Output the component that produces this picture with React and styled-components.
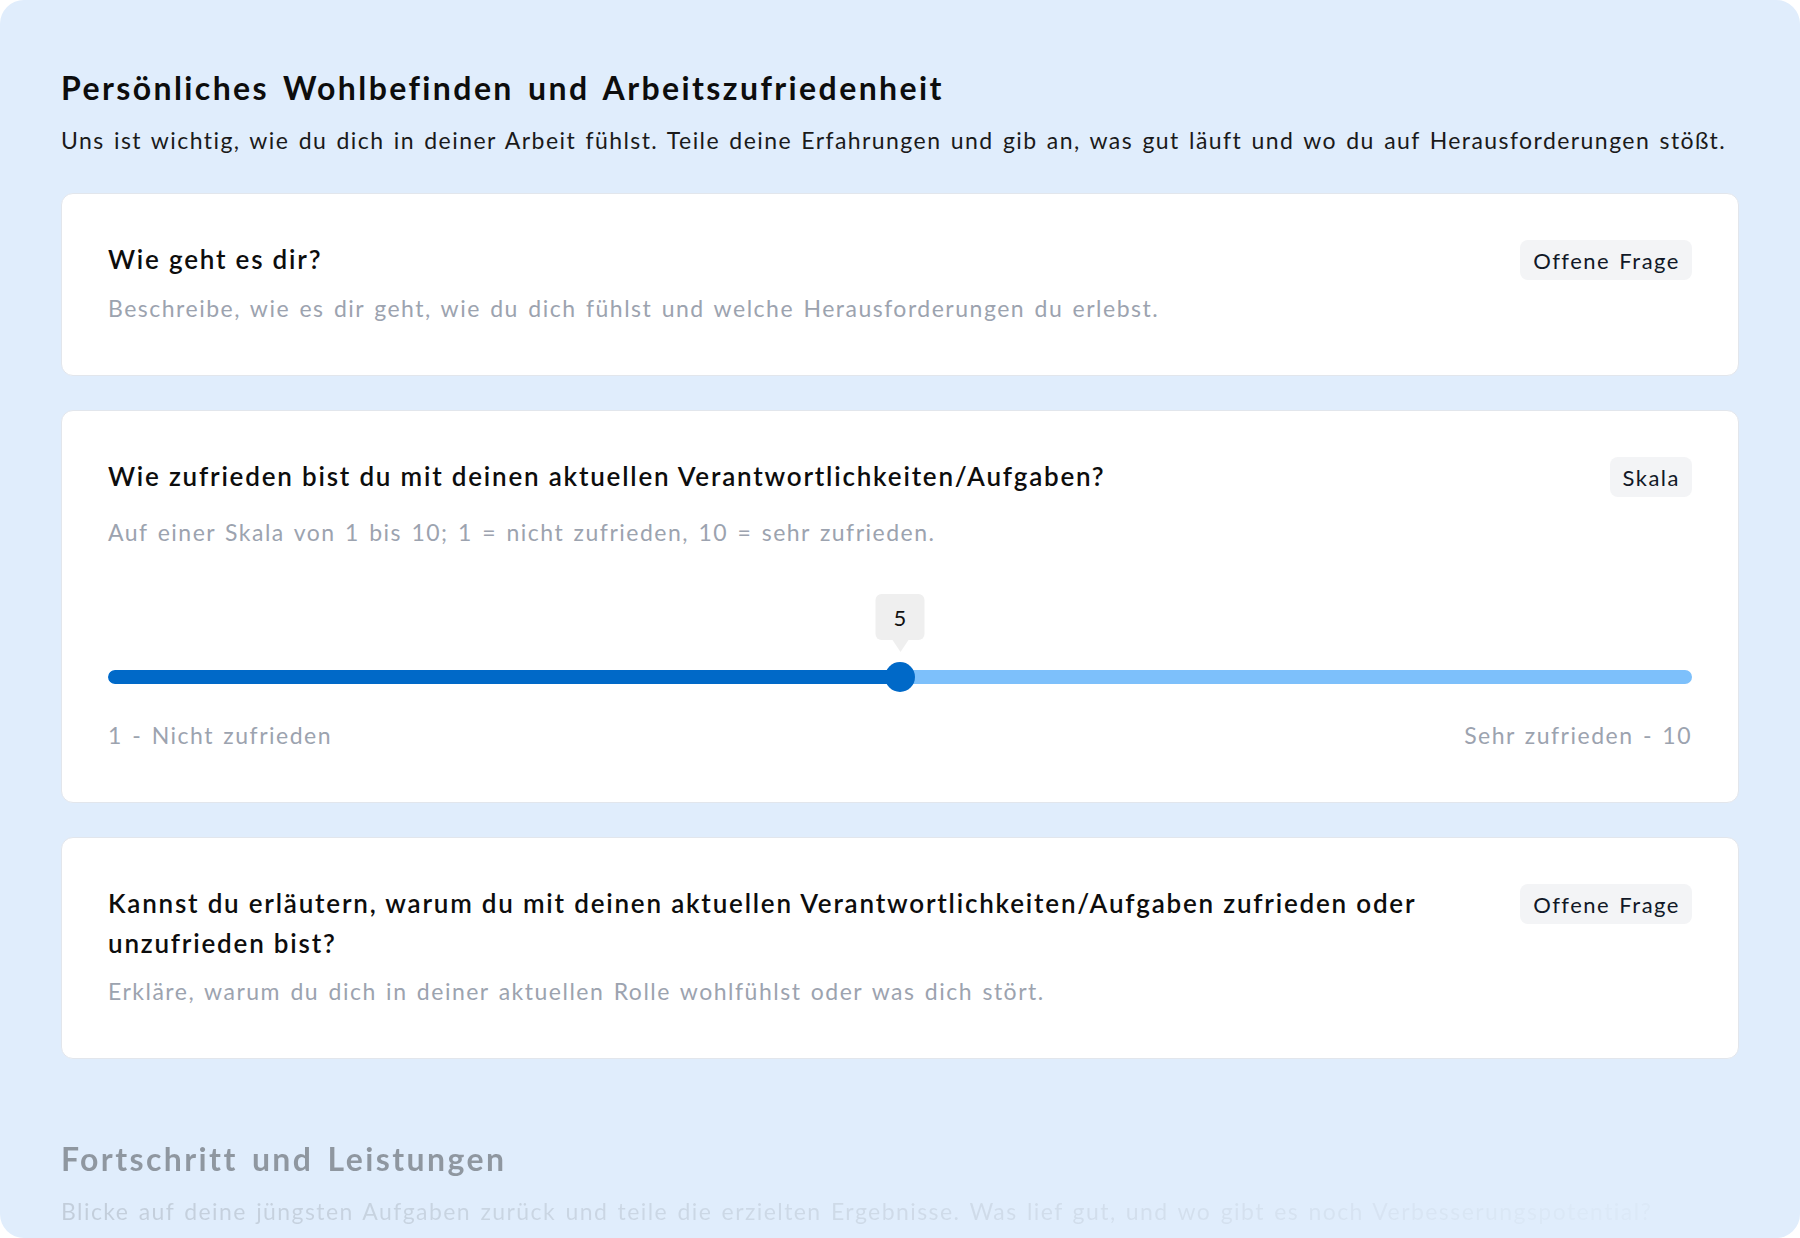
import React from "react";
import styled, { createGlobalStyle } from "styled-components";

const GlobalStyle = createGlobalStyle`
  html, body {
    margin: 0;
    padding: 0;
    background: #ffffff;
  }
  body {
    font-family: "Lato", "Noto Sans", sans-serif;
    -webkit-font-smoothing: antialiased;
  }
  * {
    box-sizing: border-box;
  }
`;

const questions = [
  {
    id: 1,
    type: "open",
    badge: "Offene Frage",
    title: "Wie geht es dir?",
    text: "Beschreibe, wie es dir geht, wie du dich fühlst und welche Herausforderungen du erlebst.",
  },
  {
    id: 2,
    type: "scale",
    badge: "Skala",
    title: "Wie zufrieden bist du mit deinen aktuellen Verantwortlichkeiten/Aufgaben?",
    text: "Auf einer Skala von 1 bis 10; 1 = nicht zufrieden, 10 = sehr zufrieden.",
    value: 5,
    max: 10,
  },
  {
    id: 3,
    type: "open",
    badge: "Offene Frage",
    title:
      "Kannst du erläutern, warum du mit deinen aktuellen Verantwortlichkeiten/Aufgaben zufrieden oder unzufrieden bist?",
    text: "Erkläre, warum du dich in deiner aktuellen Rolle wohlfühlst oder was dich stört.",
  },
];

function ScaleSlider({ value, max }) {
  const pct = (value / max) * 100;
  return (
    <SliderBlock>
      <TrackArea>
        <Track>
          <TrackFill style={{ width: `${pct}%` }} />
        </Track>
        <Thumb style={{ left: `${pct}%` }}>
          <ValueTip>{value}</ValueTip>
        </Thumb>
      </TrackArea>
      <ScaleLabels>
        <span>1 - Nicht zufrieden</span>
        <span>Sehr zufrieden - 10</span>
      </ScaleLabels>
    </SliderBlock>
  );
}

export default function App() {
  return (
    <>
      <GlobalStyle />
      <Page>
        <Section>
          <SectionTitle>Persönliches Wohlbefinden und Arbeitszufriedenheit</SectionTitle>
          <SectionText>
            Uns ist wichtig, wie du dich in deiner Arbeit fühlst. Teile deine Erfahrungen und gib an,
            was gut läuft und wo du auf Herausforderungen stößt.
          </SectionText>
          <CardList>
            {questions.map((q) => (
              <Card key={q.id}>
                <CardHeader>
                  <QuestionTitle>{q.title}</QuestionTitle>
                  <Badge>{q.badge}</Badge>
                </CardHeader>
                <QuestionText $scale={q.type === "scale"}>{q.text}</QuestionText>
                {q.type === "scale" && <ScaleSlider value={q.value} max={q.max} />}
              </Card>
            ))}
          </CardList>
        </Section>

        <FadedSection>
          <SectionTitle>Fortschritt und Leistungen</SectionTitle>
          <SectionText>
            Blicke auf deine jüngsten Aufgaben zurück und teile die erzielten Ergebnisse. Was lief gut,
            und wo gibt es noch Verbesserungspotential?
          </SectionText>
        </FadedSection>
      </Page>
    </>
  );
}

const Page = styled.div`
  width: 1800px;
  height: 1238px;
  overflow: hidden;
  background: #e0edfc;
  border-radius: 24px;
  padding: 68px 61px 0;
  display: flex;
  flex-direction: column;
  gap: 80px;
`;

const Section = styled.section`
  display: flex;
  flex-direction: column;
`;

const SectionTitle = styled.h2`
  margin: 0;
  font-size: 32px;
  line-height: 40px;
  font-weight: 700;
  color: #0d0d0d;
  letter-spacing: 2.4px;
  word-spacing: 4px;
`;

const SectionText = styled.p`
  margin: 16px 0 0;
  font-size: 23px;
  line-height: 32px;
  color: #1a1a1a;
  letter-spacing: 1.43px;
  word-spacing: 2px;
  white-space: nowrap;
`;

const FadedSection = styled(Section)`
  opacity: 0.38;

  ${SectionText} {
    -webkit-mask-image: linear-gradient(to right, rgba(0, 0, 0, 0.38) 0%, rgba(0, 0, 0, 0.2) 60%, rgba(0, 0, 0, 0.06) 90%);
    mask-image: linear-gradient(to right, rgba(0, 0, 0, 0.38) 0%, rgba(0, 0, 0, 0.2) 60%, rgba(0, 0, 0, 0.06) 90%);
  }
`;

const CardList = styled.div`
  margin-top: 37px;
  display: flex;
  flex-direction: column;
  gap: 34px;
`;

const Card = styled.div`
  background: #ffffff;
  border: 1px solid #e2e6ec;
  border-radius: 12px;
  padding: 46px 46px 49px;
`;

const CardHeader = styled.div`
  display: flex;
  align-items: flex-start;
  justify-content: space-between;
  gap: 80px;
`;

const QuestionTitle = styled.h3`
  margin: -1px 0 0;
  font-size: 26px;
  line-height: 40px;
  font-weight: 600;
  color: #0d0d0d;
  letter-spacing: 1.8px;
`;

const Badge = styled.span`
  flex-shrink: 0;
  height: 40px;
  padding: 0 12px 0 13px;
  display: inline-flex;
  align-items: center;
  border-radius: 8px;
  background: #f3f4f6;
  color: #111827;
  font-size: 22px;
  letter-spacing: 1.5px;
  word-spacing: 2px;
`;

const QuestionText = styled.p`
  margin: ${(p) => (p.$scale ? "17px" : "10px")} 0 0;
  font-size: 23px;
  line-height: 36px;
  color: #9ca3af;
  letter-spacing: 1.5px;
  word-spacing: 2px;
`;

const SliderBlock = styled.div`
  margin-top: 112px;
  display: flex;
  flex-direction: column;
  gap: 25px;
`;

const TrackArea = styled.div`
  position: relative;
  height: 30px;
  display: flex;
  align-items: center;
`;

const Track = styled.div`
  width: 100%;
  height: 14px;
  border-radius: 7px;
  background: #7dc0fb;
  overflow: hidden;
`;

const TrackFill = styled.div`
  height: 100%;
  background: #0069c8;
  border-radius: 7px;
`;

const Thumb = styled.div`
  position: absolute;
  top: 0;
  width: 30px;
  height: 30px;
  margin-left: -15px;
  border-radius: 50%;
  background: #0069c8;
`;

const ValueTip = styled.div`
  position: absolute;
  bottom: 52px;
  left: 50%;
  transform: translateX(-50%);
  width: 49px;
  height: 46px;
  border-radius: 6px;
  background: #efefef;
  color: #111;
  font-size: 22px;
  display: flex;
  align-items: center;
  justify-content: center;

  &::after {
    content: "";
    position: absolute;
    top: 100%;
    left: 50%;
    margin-left: -8px;
    border-left: 8px solid transparent;
    border-right: 8px solid transparent;
    border-top: 12px solid #efefef;
  }
`;

const ScaleLabels = styled.div`
  display: flex;
  justify-content: space-between;
  font-size: 23px;
  line-height: 36px;
  color: #9ca3af;
  letter-spacing: 1.5px;
  word-spacing: 2px;
`;
